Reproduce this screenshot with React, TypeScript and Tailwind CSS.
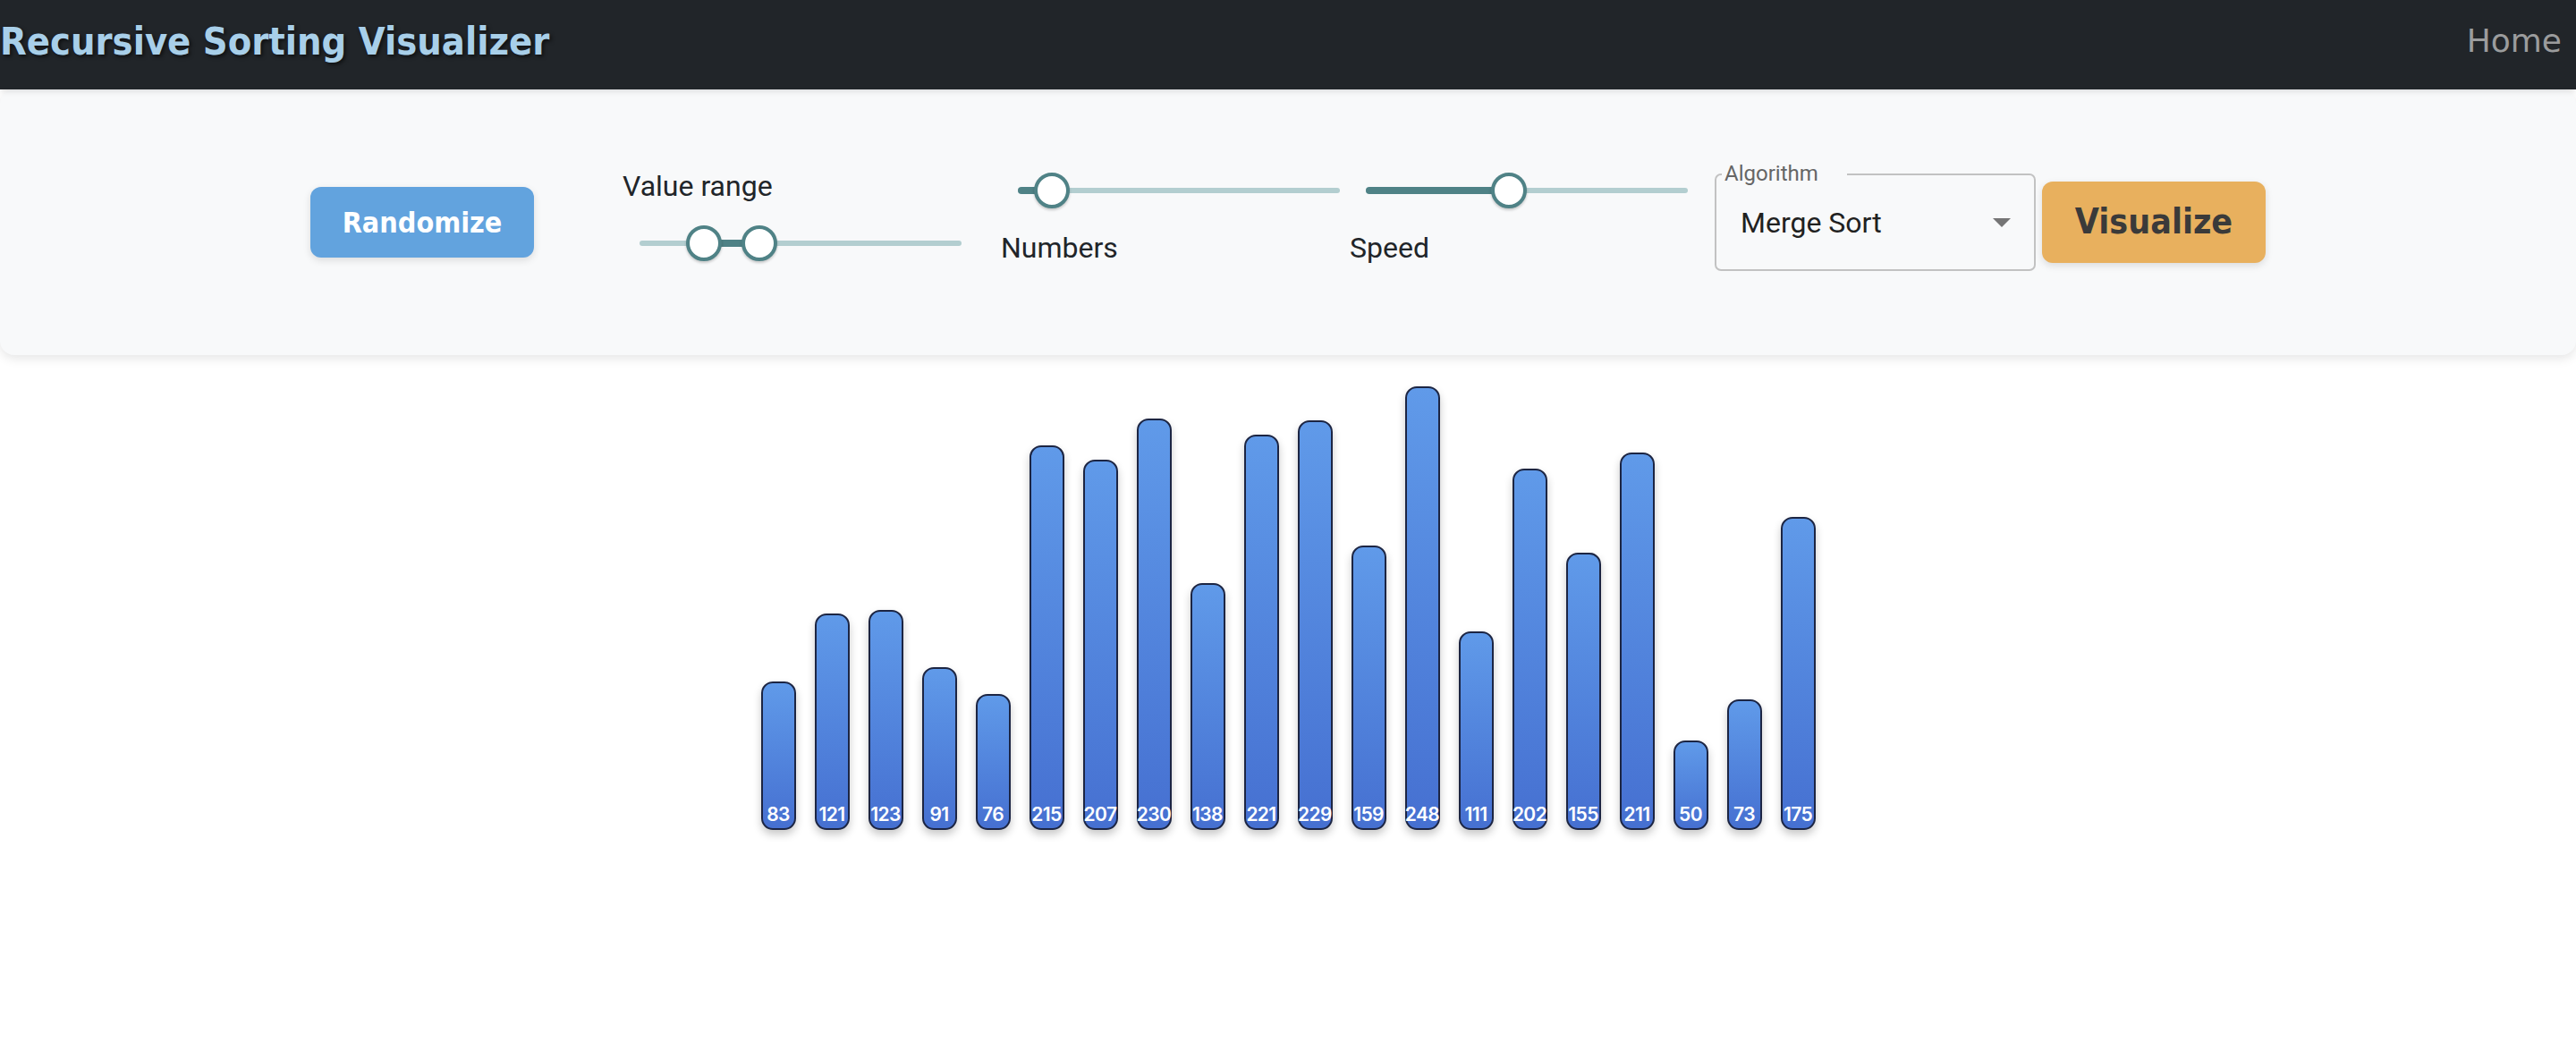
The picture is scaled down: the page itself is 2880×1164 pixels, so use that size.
import React from "react";

// Values drawn as bars; each unit is 2px tall.
const VALUES = [83, 121, 123, 91, 76, 215, 207, 230, 138, 221, 229, 159, 248, 111, 202, 155, 211, 50, 73, 175];

const DEJAVU = { fontFamily: '"DejaVu Sans Condensed", "DejaVu Sans", sans-serif', fontStretch: "condensed" } as const;

function Slider({ thumbs, from, to }: { thumbs: number[]; from: number; to: number }) {
  return (
    <div className="relative flex h-[40px] w-[360px] items-center">
      <div className="h-[6px] w-full rounded-full bg-[#b3ced0]" />
      <div
        className="absolute h-[8px] rounded-full bg-[#4f8286]"
        style={{ left: from, width: to - from }}
      />
      {thumbs.map((t) => (
        <div
          key={t}
          className="absolute top-0 -ml-[20px] h-[40px] w-[40px] rounded-full border-[4px] border-[#4f8286] bg-white shadow-[0_2px_3px_rgba(0,0,0,0.2)]"
          style={{ left: t }}
        />
      ))}
    </div>
  );
}

function Bar({ value }: { value: number }) {
  return (
    <div
      className="flex w-[39px] flex-col items-center justify-end rounded-[13px] border-2 border-[#1c2543] bg-gradient-to-b from-[#609ae9] to-[#4670d1] pb-[5px] shadow-[0_5px_10px_rgba(0,0,0,0.22)]"
      style={{ height: value * 2 }}
    >
      <span className="whitespace-nowrap font-['Inter',sans-serif] text-[21px] font-semibold leading-none tracking-[-0.6px] text-white">
        {value}
      </span>
    </div>
  );
}

export default function App() {
  return (
    <div className="min-h-screen bg-white font-['Roboto',sans-serif] text-[#212529]">
      <nav className="relative z-10 flex h-[100px] items-center justify-between bg-[#212529] pb-[8px] pr-[16px] shadow-[0_2px_6px_rgba(0,0,0,0.12)]">
        <h1
          className="text-[43px] font-bold leading-none text-[#a8cfe9] [text-shadow:2px_2px_4px_rgba(0,0,0,0.6)]"
          style={DEJAVU}
        >
          Recursive Sorting Visualizer
        </h1>
        <a className="font-['DejaVu_Sans',sans-serif] text-[36px] leading-none text-[#9b9c9d]">Home</a>
      </nav>

      <section className="flex h-[297px] items-center justify-center rounded-[16px] bg-[#f8f9fa] shadow-[0_4px_12px_rgba(0,0,0,0.1)]">
        <button
          className="h-[79px] w-[250px] rounded-[12px] bg-[#62a3de] text-[32px] font-bold text-white shadow-[0_3px_8px_rgba(0,0,0,0.12)]"
          style={DEJAVU}
        >
          Randomize
        </button>

        <div className="ml-[99px] flex flex-col pb-[17px]">
          <span className="text-[32px] leading-[40px]">Value range</span>
          <div className="ml-[19px] mt-[24px]">
            <Slider thumbs={[72, 134]} from={72} to={134} />
          </div>
        </div>

        <div className="ml-[44px] flex flex-col pb-[7px]">
          <div className="ml-[19px]">
            <Slider thumbs={[38]} from={0} to={38} />
          </div>
          <span className="mt-[24px] text-[32px] leading-[40px]">Numbers</span>
        </div>

        <div className="ml-[11px] flex flex-col pb-[7px]">
          <div className="ml-[18px]">
            <Slider thumbs={[160]} from={0} to={160} />
          </div>
          <span className="mt-[24px] text-[32px] leading-[40px]">Speed</span>
        </div>

        <div className="relative ml-[30px] flex h-[109px] w-[359px] items-center justify-between rounded-[7px] border-2 border-[#c2c2c2] pl-[27px] pr-[26px]">
          <span className="absolute left-[6px] top-[-16px] w-[140px] bg-[#f8f9fa] pl-[3px] text-[24px] leading-[28px] text-[#666666]">
            Algorithm
          </span>
          <span className="text-[32px] leading-[40px] text-[#212121]">Merge Sort</span>
          <svg width="20" height="10" viewBox="0 0 20 10">
            <polygon points="0,0 20,0 10,10" fill="#757575" />
          </svg>
        </div>

        <button
          className="ml-[7px] h-[91px] w-[250px] rounded-[12px] bg-[#e8b05e] text-[39px] font-bold text-[#3a3a3a] shadow-[0_3px_8px_rgba(0,0,0,0.12)]"
          style={DEJAVU}
        >
          Visualize
        </button>
      </section>

      <div className="flex h-[531px] items-end justify-center gap-[21px]">
        {VALUES.map((v, i) => (
          <Bar key={i} value={v} />
        ))}
      </div>
    </div>
  );
}
